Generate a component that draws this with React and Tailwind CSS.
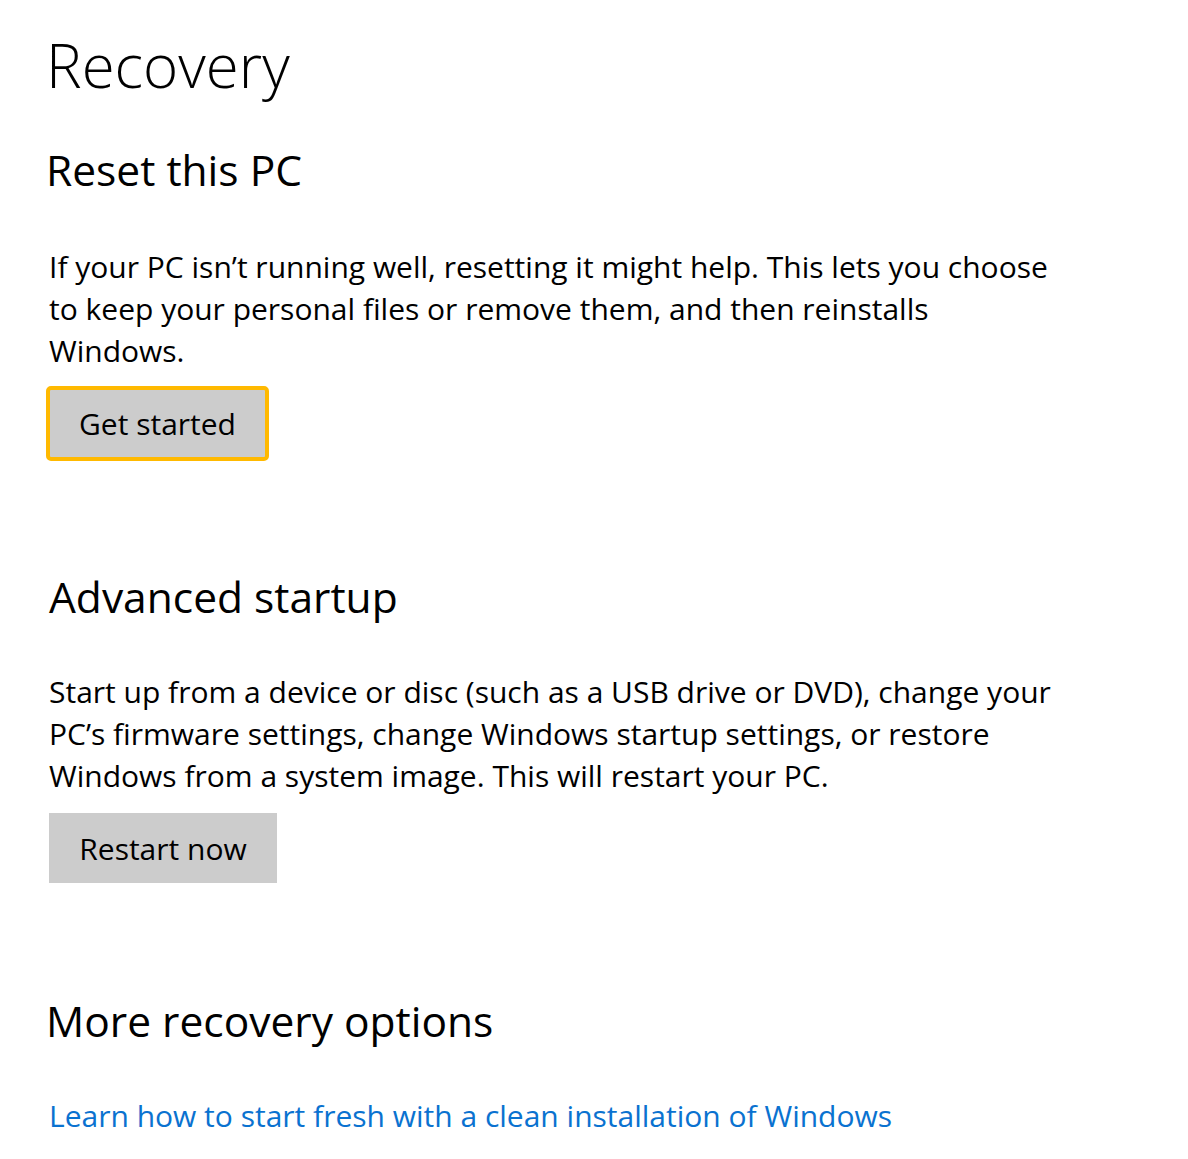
import React from 'react'

const font = { fontFamily: '"Open Sans", "Noto Sans", sans-serif' }

function Heading({ children, className = '' }) {
  return <h2 className={`text-[42.5px] leading-[44px] text-black ${className}`}>{children}</h2>
}

function Body({ children, className = '' }) {
  return <p className={`text-[30px] leading-[42px] text-black ${className}`}>{children}</p>
}

export default function App() {
  return (
    <div className="bg-white w-[1188px] h-[1159px] pl-[46px] pt-[34px]" style={font}>
      <h1 className="text-[60px] leading-[62px] font-light text-black">Recovery</h1>

      {/* Reset this PC */}
      <Heading className="mt-[52px]">Reset this PC</Heading>
      <Body className="mt-[54px] pl-[3px]">
        If your PC isn’t running well, resetting it might help. This lets you choose<br />
        to keep your personal files or remove them, and then reinstalls<br />
        Windows.
      </Body>
      <button className="mt-[14px] w-[223px] h-[75px] bg-[#cccccc] border-4 border-[#ffb900] rounded-[5px] text-[30px] text-black flex items-center justify-center">
        Get started
      </button>

      {/* Advanced startup */}
      <Heading className="mt-[114px] ml-[3px]">Advanced startup</Heading>
      <Body className="mt-[52px] pl-[3px]">
        Start up from a device or disc (such as a USB drive or DVD), change your<br />
        PC’s firmware settings, change Windows startup settings, or restore<br />
        Windows from a system image. This will restart your PC.
      </Body>
      <button className="mt-[16px] ml-[3px] w-[228px] h-[70px] bg-[#cccccc] text-[30px] text-black flex items-center justify-center">
        Restart now
      </button>

      {/* More recovery options */}
      <Heading className="mt-[116px]">More recovery options</Heading>
      <a className="block mt-[52px] pl-[3px] text-[30px] leading-[42px] text-[#0a72d0]">
        Learn how to start fresh with a clean installation of Windows
      </a>
    </div>
  )
}
